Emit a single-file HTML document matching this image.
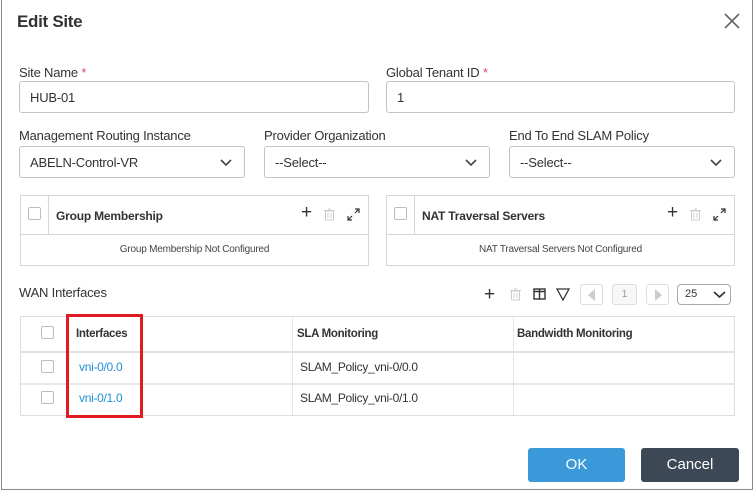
<!DOCTYPE html>
<html><head><style>
*{box-sizing:border-box;margin:0;padding:0}
body{width:754px;height:490px;background:#fff;font-family:"Liberation Sans",sans-serif;color:#333;position:relative;overflow:hidden}
.frame{position:absolute;left:1px;top:0;width:752px;height:490px;border:1px solid #8a8a8a;border-top:none}
.a{position:absolute}
.lbl{font-size:13px;color:#333;letter-spacing:-0.2px}
.star{color:#e0457b}
.inp{position:absolute;border:1px solid #c4c4c4;border-radius:3px;height:32px;font-size:13px;padding:0 10px;line-height:31px;color:#333;letter-spacing:-0.2px}
.chev{position:absolute;right:12px;top:12px}
.panel{position:absolute;border:1px solid #d6d6d6;background:#fff}
.cb{position:absolute;width:13px;height:13px;border:1px solid #bdbdbd;border-radius:2px;background:#fff}
.ph{font-size:12px;font-weight:bold;color:#333;letter-spacing:-0.2px}
.pe{font-size:10px;color:#444;text-align:center;letter-spacing:-0.2px}
.t{font-size:12px;letter-spacing:-0.3px}
.hd{font-weight:bold;font-size:11.5px;letter-spacing:-0.3px}
.link{color:#1f8fd6;font-size:12px;letter-spacing:-0.3px}
</style></head><body>
<div class="frame"></div>
<div class="a" style="left:17px;top:12px;font-size:17px;font-weight:bold;color:#333;letter-spacing:-0.3px">Edit Site</div>
<svg class="a" style="left:724px;top:13px" width="16" height="16"><path d="M1 1L15 15M15 1L1 15" stroke="#666" stroke-width="1.6"/></svg>

<div class="a lbl" style="left:19px;top:65px">Site Name <span class="star">*</span></div>
<div class="a lbl" style="left:386px;top:65px">Global Tenant ID <span class="star">*</span></div>
<div class="inp" style="left:19px;top:81px;width:350px">HUB-01</div>
<div class="inp" style="left:386px;top:81px;width:349px">1</div>

<div class="a lbl" style="left:19px;top:128px">Management Routing Instance</div>
<div class="a lbl" style="left:264px;top:128px">Provider Organization</div>
<div class="a lbl" style="left:509px;top:128px">End To End SLAM Policy</div>
<div class="inp" style="left:19px;top:146px;width:226px">ABELN-Control-VR<svg class="chev" width="12" height="8"><path d="M1 1L6 6L11 1" stroke="#444" stroke-width="1.6" fill="none"/></svg></div>
<div class="inp" style="left:264px;top:146px;width:226px">--Select--<svg class="chev" width="12" height="8"><path d="M1 1L6 6L11 1" stroke="#444" stroke-width="1.6" fill="none"/></svg></div>
<div class="inp" style="left:509px;top:146px;width:226px">--Select--<svg class="chev" width="12" height="8"><path d="M1 1L6 6L11 1" stroke="#444" stroke-width="1.6" fill="none"/></svg></div>

<div class="panel" style="left:20px;top:195px;width:349px;height:71px">
 <div class="a" style="left:27px;top:0;width:1px;height:38px;background:#d6d6d6"></div>
 <div class="a" style="left:0;top:38px;width:347px;height:1px;background:#d6d6d6"></div>
 <div class="cb" style="left:7px;top:11px"></div>
 <div class="a ph" style="left:35px;top:13px">Group Membership</div>
 <div class="a" style="left:280px;top:6px;font-size:19px;color:#333">+</div>
 <svg class="a" style="left:303px;top:12px" width="11" height="13"><rect x="1.5" y="3" width="8" height="9" fill="none" stroke="#ccc"/><path d="M0 2.5H11M4 1H7M4 5V10M7 5V10" stroke="#ccc"/></svg>
 <svg class="a" style="left:326px;top:12px" width="13" height="13"><path d="M8 1H12V5M12 1L8 5M1 8V12H5M1 12L5 8" stroke="#333" fill="none" stroke-width="1.2"/></svg>
 <div class="a pe" style="left:0;top:48px;width:347px">Group Membership Not Configured</div>
</div>
<div class="panel" style="left:386px;top:195px;width:349px;height:71px">
 <div class="a" style="left:27px;top:0;width:1px;height:38px;background:#d6d6d6"></div>
 <div class="a" style="left:0;top:38px;width:347px;height:1px;background:#d6d6d6"></div>
 <div class="cb" style="left:7px;top:11px"></div>
 <div class="a ph" style="left:35px;top:13px">NAT Traversal Servers</div>
 <div class="a" style="left:280px;top:6px;font-size:19px;color:#333">+</div>
 <svg class="a" style="left:303px;top:12px" width="11" height="13"><rect x="1.5" y="3" width="8" height="9" fill="none" stroke="#ccc"/><path d="M0 2.5H11M4 1H7M4 5V10M7 5V10" stroke="#ccc"/></svg>
 <svg class="a" style="left:326px;top:12px" width="13" height="13"><path d="M8 1H12V5M12 1L8 5M1 8V12H5M1 12L5 8" stroke="#333" fill="none" stroke-width="1.2"/></svg>
 <div class="a pe" style="left:0;top:48px;width:347px">NAT Traversal Servers Not Configured</div>
</div>

<div class="a lbl" style="left:19px;top:285px">WAN Interfaces</div>
<div class="a" style="left:484px;top:284px;font-size:19px;color:#333">+</div>
<svg class="a" style="left:510px;top:288px" width="11" height="13"><rect x="1.5" y="3" width="8" height="9" fill="none" stroke="#ccc"/><path d="M0 2.5H11M4 1H7M4 5V10M7 5V10" stroke="#ccc"/></svg>
<svg class="a" style="left:533px;top:288px" width="13" height="12"><rect x="1" y="1" width="11" height="10" fill="none" stroke="#333" stroke-width="1.4"/><path d="M1 3.5H12M6.5 1V11" stroke="#333" stroke-width="1.4"/></svg>
<svg class="a" style="left:556px;top:288px" width="14" height="13"><path d="M1 1H13L7 12Z" fill="none" stroke="#333" stroke-width="1.3"/></svg>
<div class="a" style="left:580px;top:284px;width:23px;height:21px;border:1px solid #ddd;border-radius:3px"><svg style="position:absolute;left:7px;top:4px" width="8" height="12"><path d="M7 0V12L0 6Z" fill="#ccc"/></svg></div>
<div class="a" style="left:612px;top:284px;width:25px;height:21px;border:1px solid #ddd;border-radius:3px;background:#f7f7f7;font-size:10px;color:#999;text-align:center;line-height:19px">1</div>
<div class="a" style="left:646px;top:284px;width:23px;height:21px;border:1px solid #ddd;border-radius:3px"><svg style="position:absolute;left:8px;top:4px" width="8" height="12"><path d="M0 0V12L7 6Z" fill="#ccc"/></svg></div>
<div class="a" style="left:677px;top:284px;width:54px;height:21px;border:1px solid #aaa;border-radius:4px;font-size:11px;padding-left:7px;line-height:19px">25<svg style="position:absolute;right:4px;top:6px" width="13" height="8"><path d="M1 1L6.5 6L12 1" stroke="#333" stroke-width="1.6" fill="none"/></svg></div>

<div class="a" style="left:20px;top:316px;width:715px;height:100px;border:1px solid #ddd">
 <div class="a" style="left:0;top:34px;width:713px;height:2px;background:#e2e2e2"></div>
 <div class="a" style="left:0;top:66px;width:713px;height:2px;background:#e8e8e8"></div>
 <div class="a" style="left:271px;top:0;width:1px;height:98px;background:#e6e6e6"></div>
 <div class="a" style="left:492px;top:0;width:1px;height:98px;background:#e6e6e6"></div>
 <div class="cb" style="left:20px;top:9px"></div>
 <div class="cb" style="left:20px;top:43px"></div>
 <div class="cb" style="left:20px;top:74px"></div>
 <div class="a hd" style="left:55px;top:11px">Interfaces</div>
 <div class="a hd" style="left:276px;top:11px">SLA Monitoring</div>
 <div class="a hd" style="left:496px;top:11px">Bandwidth Monitoring</div>
 <div class="a link" style="left:58px;top:43px">vni-0/0.0</div>
 <div class="a link" style="left:58px;top:74px">vni-0/1.0</div>
 <div class="a t" style="left:279px;top:43px">SLAM_Policy_vni-0/0.0</div>
 <div class="a t" style="left:279px;top:74px">SLAM_Policy_vni-0/1.0</div>
</div>
<div class="a" style="left:66px;top:314px;width:77px;height:104px;border:3px solid #e11b22"></div>

<div class="a" style="left:528px;top:448px;width:97px;height:34px;background:#3a9ad9;border-radius:3px;color:#fff;font-size:15px;text-align:center;line-height:34px">OK</div>
<div class="a" style="left:641px;top:448px;width:98px;height:34px;background:#3c4855;border-radius:3px;color:#fff;font-size:15px;text-align:center;line-height:34px">Cancel</div>
</body></html>
